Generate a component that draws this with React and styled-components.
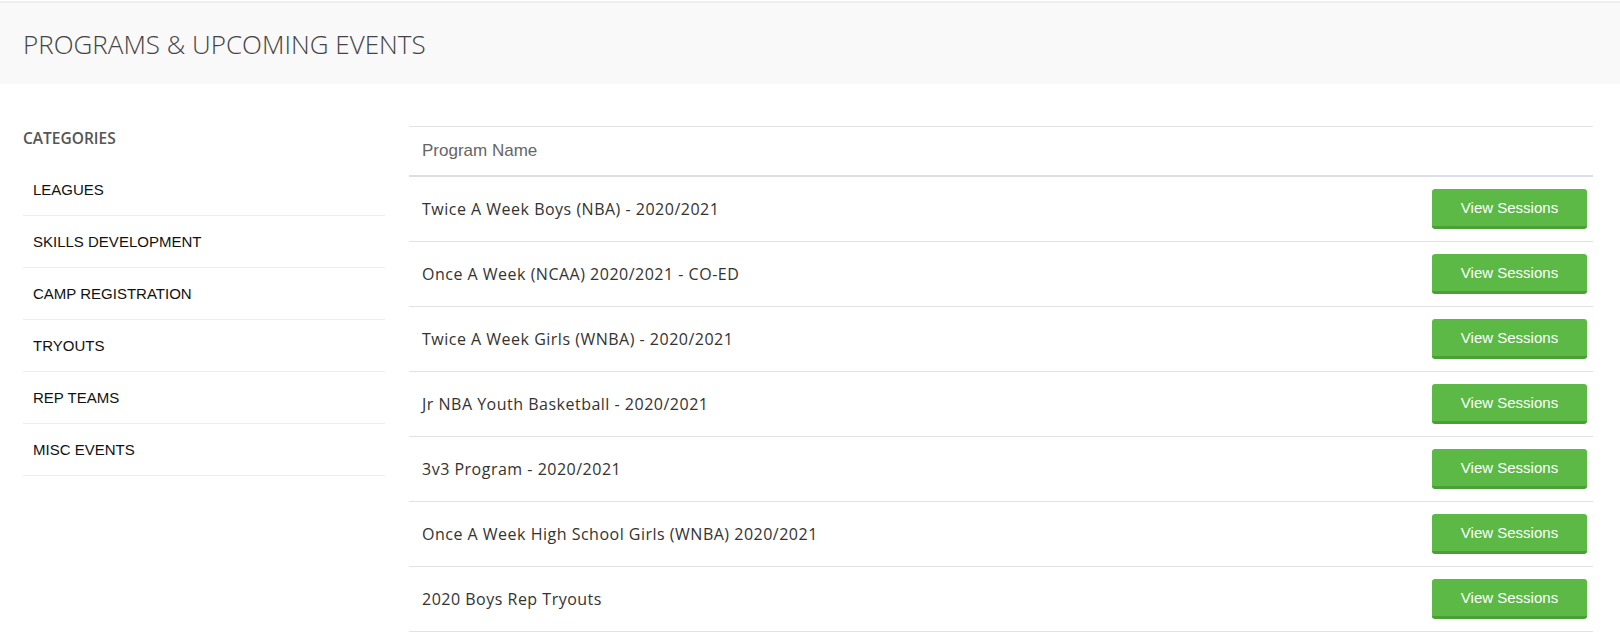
import styled, { createGlobalStyle } from "styled-components";

const GlobalStyle = createGlobalStyle`
  html, body {
    margin: 0;
    padding: 0;
    background: #fff;
  }
`;

const categories = [
  "LEAGUES",
  "SKILLS DEVELOPMENT",
  "CAMP REGISTRATION",
  "TRYOUTS",
  "REP TEAMS",
  "MISC EVENTS",
];

const programs = [
  "Twice A Week Boys (NBA) - 2020/2021",
  "Once A Week (NCAA) 2020/2021 - CO-ED",
  "Twice A Week Girls (WNBA) - 2020/2021",
  "Jr NBA Youth Basketball - 2020/2021",
  "3v3 Program - 2020/2021",
  "Once A Week High School Girls (WNBA) 2020/2021",
  "2020 Boys Rep Tryouts",
];

const App = () => {
  return (
    <>
      <GlobalStyle />
      <Page>
        <PageHeader>
          <PageTitle>PROGRAMS &amp; UPCOMING EVENTS</PageTitle>
        </PageHeader>

        <Main>
          {/* left column */}
          <Sidebar>
            <SidebarTitle>CATEGORIES</SidebarTitle>
            <CategoryList>
              {categories.map((cat) => (
                <CategoryItem key={cat}>{cat}</CategoryItem>
              ))}
            </CategoryList>
          </Sidebar>

          {/* program table */}
          <Table>
            <thead>
              <tr>
                <HeadCell colSpan={2}>Program Name</HeadCell>
              </tr>
            </thead>
            <tbody>
              {programs.map((name) => (
                <tr key={name}>
                  <NameCell>{name}</NameCell>
                  <ActionCell>
                    <SessionsButton>View Sessions</SessionsButton>
                  </ActionCell>
                </tr>
              ))}
            </tbody>
          </Table>
        </Main>
      </Page>
    </>
  );
};

const Page = styled.div`
  padding-top: 1px;
  min-height: 638px;
`;

const PageHeader = styled.header`
  background: #f9f9f9;
  border-top: 2px solid #efefef;
  height: 81px;
  display: flex;
  align-items: center;
  padding: 0 23px;
`;

const PageTitle = styled.h1`
  margin: 0;
  font-family: "Open Sans", sans-serif;
  font-weight: 300;
  font-size: 26px;
  color: #444;
`;

const Main = styled.div`
  display: flex;
  align-items: flex-start;
  gap: 24px;
  padding: 42px 27px 0 23px;
`;

const Sidebar = styled.aside`
  width: 362px;
  flex-shrink: 0;
`;

const SidebarTitle = styled.h3`
  margin: 2px 0 16px;
  font-family: "Open Sans", sans-serif;
  font-weight: 600;
  font-size: 15.5px;
  line-height: 20px;
  color: #555;
`;

const CategoryList = styled.ul`
  list-style: none;
  margin: 0;
  padding: 0;
`;

const CategoryItem = styled.li`
  height: 51px;
  display: flex;
  align-items: center;
  padding-left: 10px;
  border-bottom: 1px solid #eeeeee;
  font-family: "Liberation Sans", Arial, sans-serif;
  font-size: 15px;
  color: #111;
  cursor: pointer;
`;

const Table = styled.table`
  flex: 1;
  border-collapse: collapse;
  border-top: 1px solid #e3e3e3;
`;

const HeadCell = styled.th`
  height: 48px;
  padding: 0 13px;
  text-align: left;
  font-family: "Liberation Sans", Arial, sans-serif;
  font-weight: 400;
  font-size: 17px;
  color: #666;
  border-bottom: 2px solid #dcdfe3;
`;

const NameCell = styled.td`
  height: 64px;
  padding: 0 13px;
  font-family: "Open Sans", sans-serif;
  font-size: 16px;
  letter-spacing: 0.5px;
  color: #333;
  border-bottom: 1px solid #e2e2e2;
`;

const ActionCell = styled.td`
  height: 64px;
  padding: 0 6px 0 0;
  text-align: right;
  border-bottom: 1px solid #e2e2e2;
`;

const SessionsButton = styled.button`
  width: 155px;
  height: 40px;
  background: #5cb946;
  border: none;
  border-bottom: 3px solid #4b9f37;
  border-radius: 3px;
  color: #fff;
  font-family: "Liberation Sans", Arial, sans-serif;
  font-size: 15px;
  cursor: pointer;
  padding: 0;

  &:hover {
    background: #52ab3d;
  }
`;

export default App;
